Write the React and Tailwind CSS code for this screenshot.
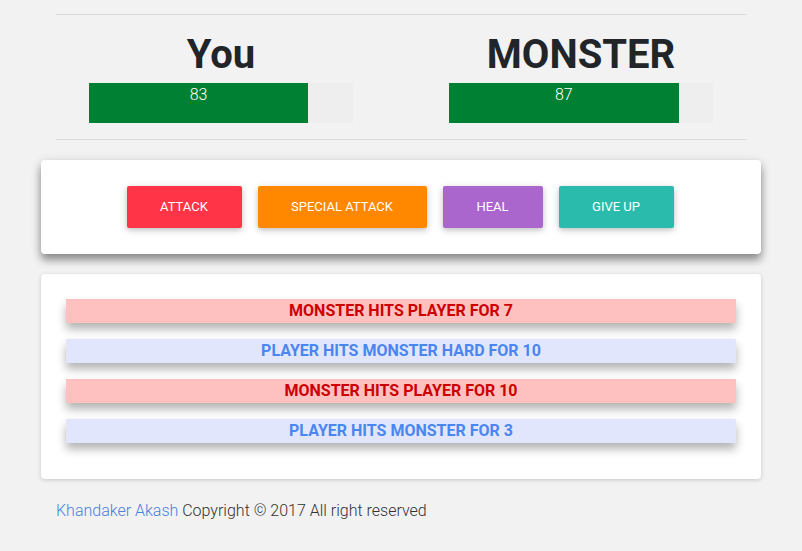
import React from "react";

const font = { fontFamily: "Roboto, 'Liberation Sans', sans-serif" };

function Player({ name, health }) {
  return (
    <div className="flex flex-col items-center w-[360px]">
      <h1 className="text-[40px] leading-[48px] font-bold text-[#212529] mt-[16px] mb-[4px]">{name}</h1>
      <div className="w-[264px] h-[40px] bg-[#eeeeee] flex">
        <div
          className="h-full bg-[#008033] text-white text-[16px] font-light leading-[24px] text-center"
          style={{ width: `${health}%` }}
        >
          {health}
        </div>
      </div>
    </div>
  );
}

const logs = [
  { text: "MONSTER HITS PLAYER FOR 7", monster: true },
  { text: "PLAYER HITS MONSTER HARD FOR 10", monster: false },
  { text: "MONSTER HITS PLAYER FOR 10", monster: true },
  { text: "PLAYER HITS MONSTER FOR 3", monster: false },
];

export default function App() {
  return (
    <div className="min-h-[551px] bg-[#f2f2f2] w-full" style={font}>
      <div className="w-[720px] ml-[41px] pt-[14px]">
        <div className="mx-[15px] border-t border-[#d9d9d9]" />
        <div className="flex">
          <Player name="You" health={83} />
          <Player name="MONSTER" health={87} />
        </div>
        <div className="mx-[15px] mt-[16px] border-t border-[#d9d9d9]" />

        <div className="mt-[20px] h-[94px] bg-white rounded-[4px] shadow-[0_6px_9px_rgba(0,0,0,0.38),0_2px_12px_rgba(0,0,0,0.12)] flex items-center justify-center gap-[16px] pr-[2px]">
          <button className="w-[115px] h-[42px] rounded-[2px] bg-[#ff3547] text-white text-[13px] shadow-[0_2px_5px_rgba(0,0,0,0.16),0_2px_10px_rgba(0,0,0,0.12)]">ATTACK</button>
          <button className="w-[169px] h-[42px] rounded-[2px] bg-[#ff8800] text-white text-[13px] shadow-[0_2px_5px_rgba(0,0,0,0.16),0_2px_10px_rgba(0,0,0,0.12)]">SPECIAL ATTACK</button>
          <button className="w-[100px] h-[42px] rounded-[2px] bg-[#aa66cc] text-white text-[13px] shadow-[0_2px_5px_rgba(0,0,0,0.16),0_2px_10px_rgba(0,0,0,0.12)]">HEAL</button>
          <button className="w-[115px] h-[42px] rounded-[2px] bg-[#2bbbad] text-white text-[13px] shadow-[0_2px_5px_rgba(0,0,0,0.16),0_2px_10px_rgba(0,0,0,0.12)]">GIVE UP</button>
        </div>

        <div className="mt-[20px] bg-white rounded-[4px] shadow-[0_1px_4px_rgba(0,0,0,0.18)] pt-[25px] pb-[36px] px-[25px] flex flex-col gap-[16px]">
          {logs.map((l, i) => (
            <div
              key={i}
              className={`h-[24px] leading-[24px] text-center text-[16px] font-bold shadow-[0_6px_10px_rgba(0,0,0,0.3)] ${
                l.monster ? "bg-[#ffc0c0] text-[#cc0000]" : "bg-[#e1e6fd] text-[#4a86f0]"
              }`}
            >
              {l.text}
            </div>
          ))}
        </div>

        <div className="mt-[20px] ml-[15px] text-[16px] font-light text-[#333333] leading-[24px]">
          <span className="text-[#4a80e0]">Khandaker Akash</span> Copyright © 2017 All right reserved
        </div>
      </div>
    </div>
  );
}
